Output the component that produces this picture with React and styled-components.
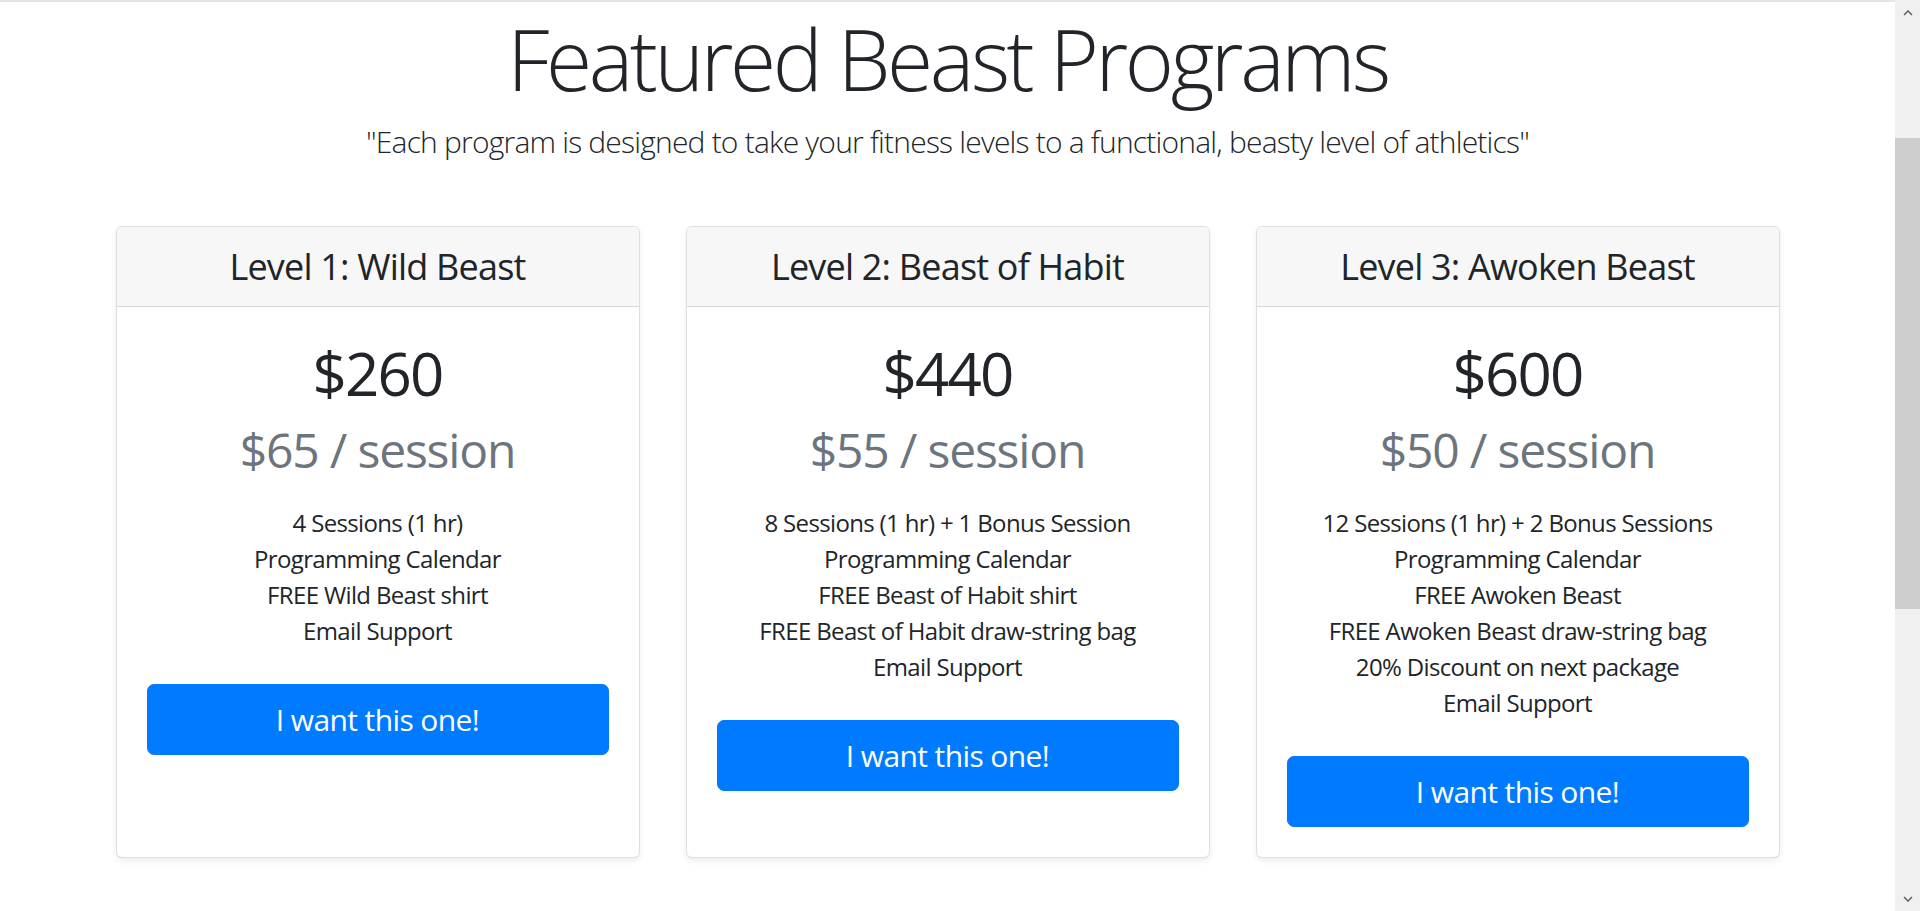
import React from "react";
import styled, { createGlobalStyle } from "styled-components";

const GlobalStyle = createGlobalStyle`
  * {
    box-sizing: border-box;
  }

  body {
    margin: 0;
    background: #fff;
    color: #212529;
    font-family: "Open Sans", "Noto Sans", "Liberation Sans", sans-serif;
  }
`;

const Page = styled.div`
  display: flex;
  height: 100vh;
  overflow: hidden;
`;

const Main = styled.main`
  flex: 1;
  display: flex;
  flex-direction: column;
  align-items: center;
  border-top: 2px solid #e5e5e5;
`;

const Title = styled.h1`
  margin: 7px 0 0;
  font-size: 84px;
  font-weight: 300;
  line-height: 1.2;
  letter-spacing: -3.4px;
`;

const Lead = styled.p`
  margin: 9px 0 0;
  font-size: 30px;
  font-weight: 300;
  line-height: 1.5;
  letter-spacing: -0.8px;
`;

const Programs = styled.div`
  display: grid;
  grid-template-columns: repeat(3, 524px);
  column-gap: 46px;
  margin-top: 62px;
`;

const Card = styled.div`
  display: flex;
  flex-direction: column;
  background: #fff;
  border: 1px solid rgba(0, 0, 0, 0.125);
  border-radius: 6px;
  box-shadow: 0 3px 6px rgba(0, 0, 0, 0.075);
  overflow: hidden;
`;

const CardHeader = styled.div`
  padding: 18px 30px;
  background: #f7f7f7;
  border-bottom: 1px solid rgba(0, 0, 0, 0.125);
  text-align: center;
`;

const Level = styled.h4`
  margin: 0;
  font-size: 36px;
  font-weight: 400;
  line-height: 1.2;
  letter-spacing: -0.8px;
`;

const CardBody = styled.div`
  flex: 1;
  padding: 30px;
  text-align: center;
`;

const Price = styled.h1`
  margin: 0 0 12px;
  font-size: 60px;
  font-weight: 400;
  line-height: 1.2;
  letter-spacing: -1.8px;
`;

const PerSession = styled.h2`
  margin: 0;
  font-size: 48px;
  font-weight: 400;
  line-height: 1.2;
  letter-spacing: -1.2px;
  color: #6c757d;
`;

const Features = styled.ul`
  list-style: none;
  margin: 26px 0 35px;
  padding: 0;
`;

const Feature = styled.li`
  font-size: 24px;
  line-height: 36px;
  letter-spacing: -0.65px;
`;

const BuyButton = styled.button`
  display: block;
  width: 100%;
  padding: 12px 24px;
  background: #007bff;
  border: 1px solid #007bff;
  border-radius: 7px;
  color: #fff;
  font-family: inherit;
  font-size: 30px;
  line-height: 1.5;
  letter-spacing: -0.6px;
  cursor: pointer;
`;

const Scrollbar = styled.aside`
  display: flex;
  flex-direction: column;
  width: 25px;
  background: #f0f0f0;
`;

const Arrow = styled.div`
  display: flex;
  align-items: center;
  justify-content: center;
  height: 25px;
  margin-top: ${p => (p.down ? "auto" : "0")};
`;

const Thumb = styled.div`
  height: 471px;
  margin-top: 113px;
  background: #cdcdcd;
`;

const programs = [
  {
    level: "Level 1: Wild Beast",
    price: "$260",
    perSession: "$65 / session",
    features: [
      "4 Sessions (1 hr)",
      "Programming Calendar",
      "FREE Wild Beast shirt",
      "Email Support"
    ]
  },
  {
    level: "Level 2: Beast of Habit",
    price: "$440",
    perSession: "$55 / session",
    features: [
      "8 Sessions (1 hr) + 1 Bonus Session",
      "Programming Calendar",
      "FREE Beast of Habit shirt",
      "FREE Beast of Habit draw-string bag",
      "Email Support"
    ]
  },
  {
    level: "Level 3: Awoken Beast",
    price: "$600",
    perSession: "$50 / session",
    features: [
      "12 Sessions (1 hr) + 2 Bonus Sessions",
      "Programming Calendar",
      "FREE Awoken Beast",
      "FREE Awoken Beast draw-string bag",
      "20% Discount on next package",
      "Email Support"
    ]
  }
];

const Chevron = ({ down }) => (
  <svg width="10" height="6" viewBox="0 0 10 6">
    <polyline
      points={down ? "1,1 5,5 9,1" : "1,5 5,1 9,5"}
      fill="none"
      stroke="#606060"
      strokeWidth="1.5"
    />
  </svg>
);

export default function App() {
  return (
    <Page>
      <GlobalStyle />
      <Main>
        <Title>Featured Beast Programs</Title>
        <Lead>
          "Each program is designed to take your fitness levels to a functional,
          beasty level of athletics"
        </Lead>
        <Programs>
          {programs.map(program => (
            <Card key={program.level}>
              <CardHeader>
                <Level>{program.level}</Level>
              </CardHeader>
              <CardBody>
                <Price>{program.price}</Price>
                <PerSession>{program.perSession}</PerSession>
                <Features>
                  {program.features.map(f => (
                    <Feature key={f}>{f}</Feature>
                  ))}
                </Features>
                <BuyButton>I want this one!</BuyButton>
              </CardBody>
            </Card>
          ))}
        </Programs>
      </Main>
      <Scrollbar>
        <Arrow>
          <Chevron />
        </Arrow>
        <Thumb />
        <Arrow down>
          <Chevron down />
        </Arrow>
      </Scrollbar>
    </Page>
  );
}
